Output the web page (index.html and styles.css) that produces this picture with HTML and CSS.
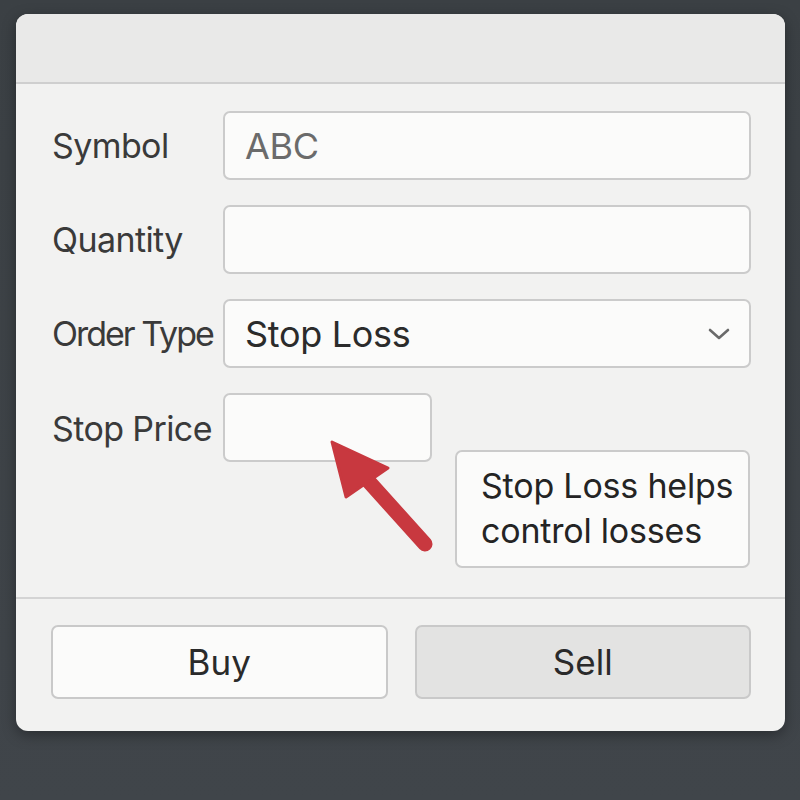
FILE: index.html
```html
<!DOCTYPE html>
<html lang="en">
<head>
<meta charset="utf-8">
<title>Order</title>
<link rel="stylesheet" href="styles.css">
</head>
<body>
<div class="card">
  <div class="header"></div>
  <div class="form">
    <div class="row">
      <label class="label">Symbol</label>
      <div class="field"><span class="value muted">ABC</span></div>
    </div>
    <div class="row">
      <label class="label">Quantity</label>
      <div class="field"></div>
    </div>
    <div class="row">
      <label class="label tight">Order Type</label>
      <div class="field select">
        <span class="value">Stop Loss</span>
        <svg class="chev" width="26" height="16" viewBox="0 0 26 16"><path d="M4 4 L13 12 L22 4" fill="none" stroke="#6a6a6a" stroke-width="2.6" stroke-linecap="round" stroke-linejoin="round"/></svg>
      </div>
    </div>
    <div class="row stop-row">
      <label class="label">Stop Price</label>
      <div class="stop-area">
        <div class="field small"></div>
        <div class="tip">Stop Loss helps control losses</div>
        <svg class="arrow" width="120" height="130" viewBox="0 0 120 130">
          <line x1="32" y1="34" x2="95" y2="104" stroke="#c8383f" stroke-width="15" stroke-linecap="round"/>
          <polygon points="2,2 58,28 16,57" fill="#c8383f" stroke="#c8383f" stroke-width="3" stroke-linejoin="round"/>
        </svg>
      </div>
    </div>
  </div>
  <div class="footer">
    <button class="btn">Buy</button>
    <button class="btn sell">Sell</button>
  </div>
</div>
</body>
</html>
```

FILE: styles.css
```css
html, body {
  margin: 0;
  padding: 0;
}
body {
  width: 800px;
  height: 800px;
  background: linear-gradient(180deg, #3b4044 0%, #40454a 100%);
  font-family: Inter, "Noto Sans", "Liberation Sans", sans-serif;
  padding-top: 14px;
  padding-left: 16px;
  box-sizing: border-box;
}
.card {
  width: 769px;
  height: 717px;
  background: #f2f2f1;
  border-radius: 12px;
  overflow: hidden;
  box-shadow: 0 4px 14px rgba(0,0,0,0.35);
  display: flex;
  flex-direction: column;
}
.header {
  height: 68px;
  background: #e9e9e8;
  border-bottom: 2px solid #cfcfcf;
  flex: none;
}
.form {
  padding: 27px 34px 0 36px;
  display: flex;
  flex-direction: column;
  gap: 25px;
  height: 515px;
  box-sizing: border-box;
  border-bottom: 2px solid #d4d4d4;
  flex: none;
}
.row {
  display: flex;
  align-items: center;
}
.label {
  width: 171px;
  flex: none;
  font-size: 34px;
  color: #3a3a3a;
  letter-spacing: -0.6px;
  white-space: nowrap;
}
.label.tight {
  letter-spacing: -2px;
}
.field {
  flex: 1;
  height: 69px;
  box-sizing: border-box;
  border: 2px solid #cbcbcb;
  border-radius: 7px;
  background: #fbfbfa;
  display: flex;
  align-items: center;
  padding-left: 20px;
}
.value {
  font-size: 36px;
  color: #2b2b2b;
  letter-spacing: -0.3px;
}
.value.muted {
  color: #6b6b6b;
}
.select {
  justify-content: space-between;
  padding-right: 17px;
}
.chev {
  display: block;
}
.stop-row {
  align-items: flex-start;
}
.stop-row .label {
  margin-top: 15px;
}
.stop-area {
  flex: 1;
  display: flex;
  align-items: flex-start;
  gap: 23px;
  position: relative;
}
.field.small {
  flex: none;
  width: 209px;
}
.tip {
  margin-top: 57px;
  width: 295px;
  height: 118px;
  box-sizing: border-box;
  border: 2px solid #cbcbcb;
  border-radius: 7px;
  background: #fbfbfa;
  font-size: 34px;
  line-height: 45px;
  color: #242424;
  padding: 11px 0 0 24px;
  letter-spacing: -0.2px;
}
.arrow {
  position: absolute;
  left: 107px;
  top: 47px;
}
.footer {
  flex: 1;
  display: flex;
  gap: 27px;
  padding: 26px 34px 0 35px;
}
.btn {
  flex: 1;
  height: 74px;
  border: 2px solid #c9c9c9;
  border-radius: 7px;
  background: #fbfbfa;
  font-family: inherit;
  font-size: 35px;
  color: #2a2a2a;
}
.btn.sell {
  background: #e3e3e2;
}
```
